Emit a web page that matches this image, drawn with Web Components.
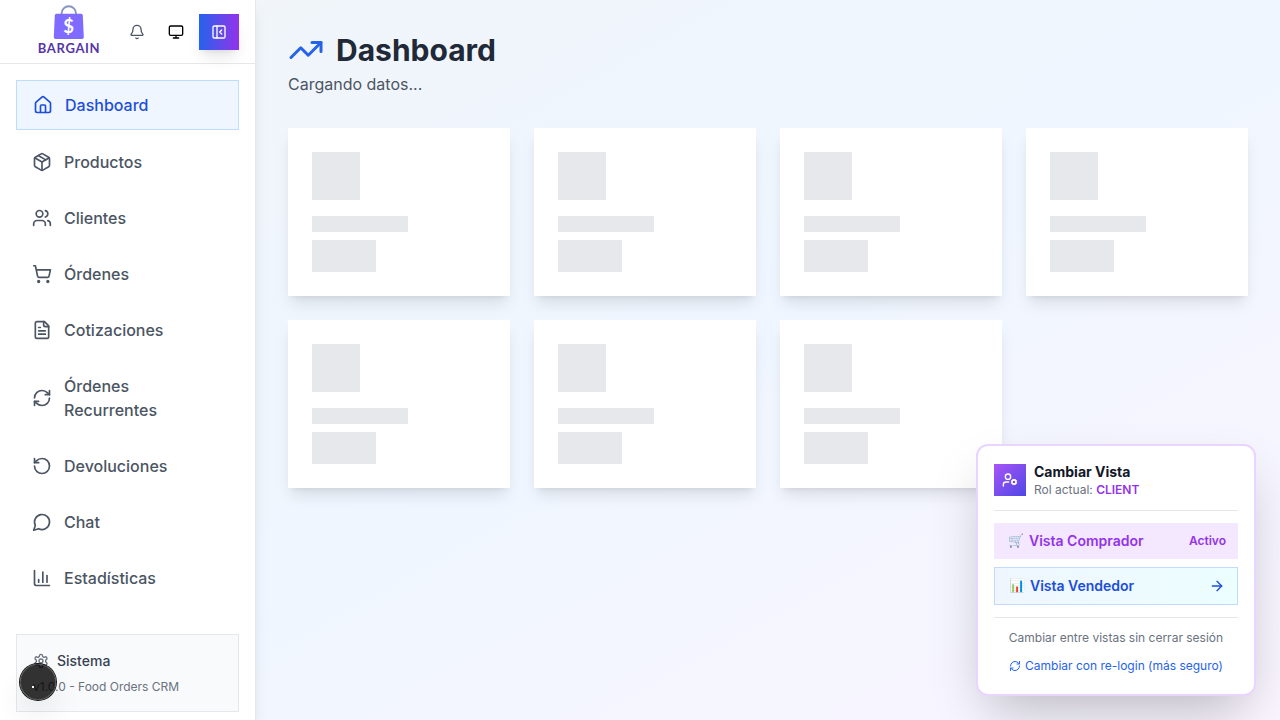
<!DOCTYPE html>
<html lang="es">
<head>
<meta charset="utf-8">
<title>Bargain</title>
<style>
body{margin:0;font-family:Inter,"Liberation Sans",sans-serif;font-size:16px;line-height:24px;color:#1f2937;overflow:hidden}
</style>
</head>
<body>
<crm-app></crm-app>
<script>
const ICONS = {
  home:'<path d="M15 21v-8a1 1 0 0 0-1-1h-4a1 1 0 0 0-1 1v8"/><path d="M3 10a2 2 0 0 1 .709-1.528l7-5.999a2 2 0 0 1 2.582 0l7 5.999A2 2 0 0 1 21 10v9a2 2 0 0 1-2 2H5a2 2 0 0 1-2-2z"/>',
  box:'<path d="M11 21.73a2 2 0 0 0 2 0l7-4A2 2 0 0 0 21 16V8a2 2 0 0 0-1-1.73l-7-4a2 2 0 0 0-2 0l-7 4A2 2 0 0 0 3 8v8a2 2 0 0 0 1 1.73z"/><path d="M12 22V12"/><path d="m3.3 7 8.7 5 8.7-5"/><path d="m7.5 4.27 9 5.15"/>',
  users:'<path d="M16 21v-2a4 4 0 0 0-4-4H6a4 4 0 0 0-4 4v2"/><path d="M16 3.128a4 4 0 0 1 0 7.744"/><path d="M22 21v-2a4 4 0 0 0-3-3.87"/><circle cx="9" cy="7" r="4"/>',
  cart:'<circle cx="8" cy="21" r="1"/><circle cx="19" cy="21" r="1"/><path d="M2.05 2.05h2l2.66 12.42a2 2 0 0 0 2 1.58h9.78a2 2 0 0 0 1.95-1.57l1.65-7.43H5.12"/>',
  file:'<path d="M15 2H6a2 2 0 0 0-2 2v16a2 2 0 0 0 2 2h12a2 2 0 0 0 2-2V7Z"/><path d="M14 2v4a2 2 0 0 0 2 2h4"/><path d="M10 9H8"/><path d="M16 13H8"/><path d="M16 17H8"/>',
  refresh:'<path d="M3 12a9 9 0 0 1 9-9 9.75 9.75 0 0 1 6.74 2.74L21 8"/><path d="M21 3v5h-5"/><path d="M21 12a9 9 0 0 1-9 9 9.75 9.75 0 0 1-6.74-2.74L3 16"/><path d="M8 16H3v5"/>',
  undo:'<path d="M3 12a9 9 0 1 0 9-9 9.75 9.75 0 0 0-6.74 2.74L3 8"/><path d="M3 3v5h5"/>',
  chat:'<path d="M7.9 20A9 9 0 1 0 4 16.1L2 22Z"/>',
  chart:'<path d="M3 3v16a2 2 0 0 0 2 2h16"/><path d="M18 17V9"/><path d="M13 17V5"/><path d="M8 17v-3"/>',
  bell:'<path d="M10.268 21a2 2 0 0 0 3.464 0"/><path d="M3.262 15.326A1 1 0 0 0 4 17h16a1 1 0 0 0 .74-1.673C19.41 13.956 18 12.499 18 8A6 6 0 0 0 6 8c0 4.499-1.411 5.956-2.738 7.326"/>',
  monitor:'<rect width="20" height="14" x="2" y="3" rx="2"/><path d="M8 21h8M12 17v4"/>',
  panel:'<rect width="18" height="18" x="3" y="3" rx="2"/><path d="M9 3v18"/><path d="m16 15-3-3 3-3"/>',
  trend:'<path d="M16 7h6v6"/><path d="m22 7-8.5 8.5-5-5L2 17"/>',
  arrow:'<path d="M5 12h14"/><path d="m12 5 7 7-7 7"/>',
  usercog:'<path d="M10 15H6a4 4 0 0 0-4 4v2"/><path d="m14.305 16.53.923-.382"/><path d="m15.228 13.852-.923-.383"/><path d="m16.852 12.228-.383-.923"/><path d="m16.852 17.772-.383.924"/><path d="m19.148 12.228.383-.923"/><path d="m19.53 18.696-.382-.924"/><path d="m20.772 13.852.924-.383"/><path d="m20.772 16.148.924.383"/><circle cx="18" cy="15" r="3"/><circle cx="9" cy="7" r="4"/>',
  gear:'<path d="M12.22 2h-.44a2 2 0 0 0-2 2v.18a2 2 0 0 1-1 1.73l-.43.25a2 2 0 0 1-2 0l-.15-.08a2 2 0 0 0-2.73.73l-.22.38a2 2 0 0 0 .73 2.73l.15.1a2 2 0 0 1 1 1.72v.51a2 2 0 0 1-1 1.74l-.15.09a2 2 0 0 0-.73 2.73l.22.38a2 2 0 0 0 2.73.73l.15-.08a2 2 0 0 1 2 0l.43.25a2 2 0 0 1 1 1.73V20a2 2 0 0 0 2 2h.44a2 2 0 0 0 2-2v-.18a2 2 0 0 1 1-1.73l.43-.25a2 2 0 0 1 2 0l.15.08a2 2 0 0 0 2.73-.73l.22-.39a2 2 0 0 0-.73-2.73l-.15-.08a2 2 0 0 1-1-1.74v-.5a2 2 0 0 1 1-1.74l.15-.09a2 2 0 0 0 .73-2.73l-.22-.38a2 2 0 0 0-2.73-.73l-.15.08a2 2 0 0 1-2 0l-.43-.25a2 2 0 0 1-1-1.73V4a2 2 0 0 0-2-2z"/><circle cx="12" cy="12" r="3"/>'
};
function define(name, css, html){
  customElements.define(name, class extends HTMLElement{
    constructor(){
      super();
      const body = typeof html === 'function' ? html(this) : html;
      this.attachShadow({mode:'open'}).innerHTML = `<style>*{box-sizing:border-box}${css}</style>${body}`;
    }
  });
}

define('ui-icon', ':host{display:block;flex:none;width:var(--s,20px);height:var(--s,20px)}svg{display:block;width:100%;height:100%}',
  el => `<svg viewBox="0 0 24 24" fill="none" stroke="currentColor" stroke-width="2" stroke-linecap="round" stroke-linejoin="round">${ICONS[el.getAttribute('name')]}</svg>`);

define('brand-logo', `:host{display:block;width:68px;height:52px}svg{display:block}text{font-family:Lato,sans-serif;font-weight:700}`,
  `<svg width="68" height="52" viewBox="34 4 68 52">
    <path d="M61.6 16v-2.5a7.2 7.2 0 0 1 14.4 0V16" fill="none" stroke="#8595bd" stroke-width="1.9"/>
    <path d="M56.4 13.7h24.8a1.6 1.6 0 0 1 1.6 1.5l1 21.9a1.6 1.6 0 0 1-1.6 1.8H55.4a1.6 1.6 0 0 1-1.6-1.8l1-21.9a1.6 1.6 0 0 1 1.6-1.5z" fill="#7f6bff"/>
    <text x="68.7" y="32.9" text-anchor="middle" font-size="18.5" fill="#fff">$</text>
    <text x="37.8" y="52.5" font-size="13" fill="#5635a8" textLength="61.8" lengthAdjust="spacing">BARGAIN</text>
  </svg>`);

define('top-bar', `:host{display:flex;flex:none;align-items:center;height:64px;border-bottom:1px solid #e5e7eb;padding:0 16px 0 34px;box-sizing:border-box}
  brand-logo{margin:-3px 27px 0 0}
  .bell{--s:16px;color:#4b5563;margin-right:23px}
  .mon{--s:16px;color:#000;margin-right:15px;margin-top:1px}
  .t{width:40px;height:36px;display:grid;place-items:center;color:#fff;--s:16px;background:linear-gradient(to right,#2563eb,#9333ea);box-shadow:0 10px 15px -3px #0000001a,0 4px 6px -4px #0000001a}`,
  `<brand-logo></brand-logo><ui-icon class="bell" name="bell"></ui-icon><ui-icon class="mon" name="monitor"></ui-icon><div class="t"><ui-icon name="panel"></ui-icon></div>`);

define('nav-item', `:host{display:flex;align-items:center;gap:12px;padding:12px 16px;color:#4b5563;font-weight:500}
  :host([active]){background:#eff6ff;border:1px solid #bfdbfe;color:#1d4ed8}`,
  el => `<ui-icon name="${el.getAttribute('icon')}"></ui-icon><span><slot></slot></span>`);

define('system-card', `:host{display:block;flex:none;box-sizing:border-box;height:78px;border:1px solid #e5e7eb;background:linear-gradient(to right,#f9fafb,#f8fafc);padding:16px}
  .r{display:flex;align-items:center;gap:8px;font-size:14px;line-height:20px;font-weight:500;color:#374151}
  ui-icon{--s:16px;color:#6b7280}
  p{margin:8px 0 0;font-size:12px;line-height:16px;color:#6b7280}`,
  `<div class="r"><ui-icon name="gear"></ui-icon>Sistema</div><p>v1.0.0 - Food Orders CRM</p>`);

define('side-bar', `:host{display:flex;flex-direction:column;box-sizing:border-box;width:256px;height:720px;flex:none;background:#fff;border-right:1px solid #e5e7eb;box-shadow:0 10px 15px -3px #0000001a,0 4px 6px -4px #0000001a;position:relative;z-index:1}
  nav{display:flex;flex-direction:column;gap:8px;padding:16px 16px 32px}
  system-card{margin:0 16px}`,
  `<top-bar></top-bar><nav>
  <nav-item icon="home" active>Dashboard</nav-item>
  <nav-item icon="box">Productos</nav-item>
  <nav-item icon="users">Clientes</nav-item>
  <nav-item icon="cart">Órdenes</nav-item>
  <nav-item icon="file">Cotizaciones</nav-item>
  <nav-item icon="refresh">Órdenes<br>Recurrentes</nav-item>
  <nav-item icon="undo">Devoluciones</nav-item>
  <nav-item icon="chat">Chat</nav-item>
  <nav-item icon="chart">Estadísticas</nav-item>
  </nav><system-card></system-card>`);

define('skeleton-card', `:host{display:block;box-sizing:border-box;height:168px;padding:24px;background:#fff;box-shadow:0 10px 15px -3px #0000001a,0 4px 6px -4px #0000001a}
  div{background:#e7e8ec}.a{width:48px;height:48px;margin-bottom:16px}.b{width:96px;height:16px;margin-bottom:8px}.c{width:64px;height:32px}`,
  `<div class="a"></div><div class="b"></div><div class="c"></div>`);

define('dashboard-view', `:host{display:block;flex:1;padding:32px}
  header{display:flex;align-items:center;gap:12px;height:36px}
  ui-icon{--s:36px;color:#2563eb}
  h1{margin:0;font-size:30px;line-height:36px;font-weight:700;color:#1f2937}
  p{margin:4px 0 0;color:#4b5563}
  .g{display:grid;grid-template-columns:repeat(4,1fr);gap:24px;margin-top:32px}`,
  `<header><ui-icon name="trend"></ui-icon><h1>Dashboard</h1></header><p>Cargando datos...</p>
  <div class="g">${'<skeleton-card></skeleton-card>'.repeat(7)}</div>`);

define('view-switcher', `:host{display:block;box-sizing:border-box;position:absolute;right:24px;bottom:24px;z-index:3;width:280px;height:252px;padding:16px;background:#fff;border:2px solid #e9d5ff;border-radius:12px;box-shadow:0 25px 50px -12px #00000040}
  .h{display:flex;gap:8px;align-items:center;height:49px;padding-bottom:12px;border-bottom:1px solid #e5e7eb;font-size:12px;line-height:16px;color:#6b7280;margin-bottom:12px}
  .i{width:32px;height:32px;display:grid;place-items:center;color:#fff;--s:16px;background:linear-gradient(to bottom right,#a855f7,#4f46e5)}
  .h b{display:block;font-size:14px;line-height:20px;font-weight:700;color:#111827}
  .h strong{font-weight:600;color:#9333ea}
  .o{display:flex;align-items:center;gap:5px;height:36px;padding:0 12px 0 14px;font-size:14px;line-height:20px;font-weight:600}
  .o small{margin-left:auto;font-size:12px}
  .o ui-icon{--s:16px;margin-left:auto}
  .e{font-family:"Noto Color Emoji",sans-serif;font-size:13px;width:16px;display:flex;justify-content:center}
  .c{background:#f3e8ff;color:#9333ea}.c .e{opacity:.9}
  .v{height:38px;margin-top:8px;border:1px solid #bfdbfe;background:linear-gradient(to right,#eff6ff,#ecfeff);color:#1d4ed8}
  .f{margin-top:12px;padding-top:12px;border-top:1px solid #e5e7eb;text-align:center;font-size:12px;line-height:16px;color:#6b7280}
  .l{display:flex;justify-content:center;align-items:center;gap:4px;color:#2563eb;--s:12px;margin-top:12px}`,
  `<div class="h"><div class="i"><ui-icon name="usercog"></ui-icon></div><div><b>Cambiar Vista</b>Rol actual: <strong>CLIENT</strong></div></div>
  <div class="o c"><span class="e">🛒</span>Vista Comprador<small>Activo</small></div>
  <div class="o v"><span class="e">📊</span>Vista Vendedor<ui-icon name="arrow"></ui-icon></div>
  <div class="f">Cambiar entre vistas sin cerrar sesión<div class="l"><ui-icon name="refresh"></ui-icon>Cambiar con re-login (más seguro)</div></div>`);

define('dev-badge', `:host{display:block;position:absolute;left:20px;top:664px;z-index:4;width:36px;height:36px;border-radius:50%;background:#000c;box-shadow:0 0 0 1px #171717,inset 0 0 0 1px #ffffff24,0 16px 32px -8px #0000003d}
  i{position:absolute;left:12px;top:22px;width:2px;height:2px;background:#fff}`, `<i></i>`);

define('crm-app', `:host{display:flex;position:relative;width:1280px;height:720px;overflow:hidden;background:linear-gradient(to bottom right,#f1f5f9,#eff6ff 50%,#faf5ff)}`,
  `<side-bar></side-bar><dashboard-view></dashboard-view><view-switcher></view-switcher><dev-badge></dev-badge>`);
</script>
</body>
</html>
